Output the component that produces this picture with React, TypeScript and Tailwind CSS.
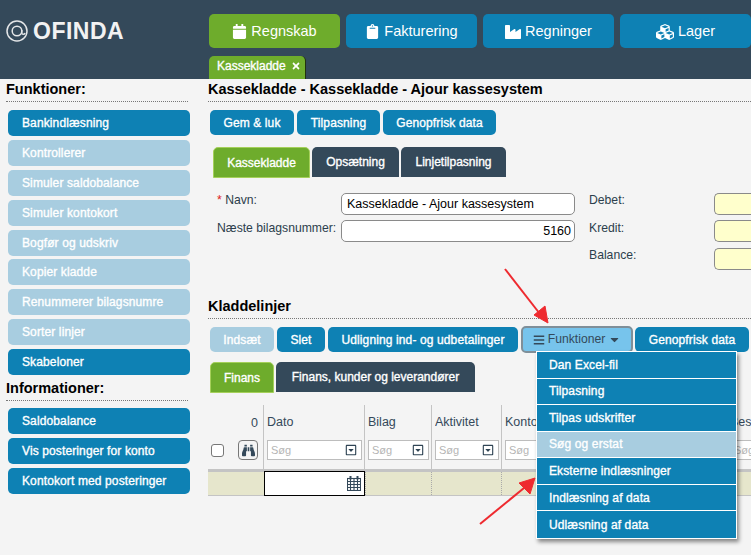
import React from 'react';
import { FaCalendar, FaClipboard, FaIndustry, FaCubes, FaBinoculars, FaTimes, FaBars, FaCaretDown, FaRegCaretSquareDown } from 'react-icons/fa';

const label = "text-white text-[12px] [-webkit-text-stroke:0.35px_#ffffff]";

const Side = ({ t, off }: { t: string; off?: boolean }) => (
  <div className={`h-[26px] w-[182px] ml-[8px] mb-[3.875px] rounded-[5px] pl-[14px] flex items-center tracking-[0.12px] ${label} ${off ? 'bg-[#a8cde0]' : 'bg-[#0e81b4]'}`}>{t}</div>
);

const Btn = ({ t, w, off, cls }: { t: string; w: string; off?: boolean; cls?: string }) => (
  <div className={`h-[25px] ${w} ${cls ?? ''} rounded-[5px] flex items-center justify-center tracking-[0.12px] ${label} ${off ? 'bg-[#a8cde0]' : 'bg-[#0e81b4]'}`}>{t}</div>
);

const Nav = ({ icon, t, on, w }: { icon: React.ReactNode; t: string; on?: boolean; w: string }) => (
  <div className={`h-[34px] ${w} shrink-0 rounded-[5px] pt-[1px] flex items-center justify-center gap-[4px] text-white text-[14.5px] ${on ? 'bg-[#6eac2c]' : 'bg-[#0e81b4]'}`}>{icon}<span>{t}</span></div>
);

const Heading = ({ t, cls }: { t: string; cls?: string }) => (
  <div className={`h-[23px] border-b border-dotted border-[#777] text-[14.5px] font-bold text-black leading-[20px] ${cls ?? ''}`}>{t}</div>
);

const Search = ({ w }: { w: string }) => (
  <div className={`h-[20px] ${w} bg-white border border-[#bdbdbd] flex items-center justify-between pl-[3px] pr-[4px] text-[11px] text-[#b5b5b5]`}>
    <span>Søg</span>
    <FaRegCaretSquareDown className="text-[#2f4454] text-[12px]" />
  </div>
);

const Head = ({ t, w, sw }: { t: string; w: string; sw: string }) => (
  <div className={`${w} shrink-0 h-[64px] border-l border-[#c4c4c4] pl-[3px] flex flex-col`}>
    <div className="h-[33px] pt-[10px] text-[12.5px] leading-[14px] text-[#34495a] whitespace-nowrap overflow-hidden">{t}</div>
    <div className="mt-[2px]"><Search w={sw} /></div>
  </div>
);

const Cell = ({ w }: { w: string }) => <div className={`${w} shrink-0 h-[23px] border-l border-dotted border-[#aaa]`} />;

const menu = ['Dan Excel-fil', 'Tilpasning', 'Tilpas udskrifter', 'Søg og erstat', 'Eksterne indlæsninger', 'Indlæsning af data', 'Udlæsning af data'];

export default function App() {
  return (
    <div className="relative w-[751px] h-[555px] overflow-hidden bg-[#f4f4f4] font-['Liberation_Sans',Arial,sans-serif]">
      <header className="h-[79px] bg-[#34495a] flex">
        <div className="w-[209px] shrink-0 pl-[6px] pt-[18px] flex items-start gap-[5px]">
          <svg width="22" height="22" viewBox="0 0 22 22" fill="none" stroke="#e4e6e8" strokeWidth="1.5" className="mt-[2px]">
            <circle cx="11" cy="11" r="10" />
            <circle cx="11" cy="11" r="4.8" />
            <path d="M15.8 10v3c0 1.8 2.6 1.8 3.2 0" />
          </svg>
          <span className="text-[23px] font-bold leading-[26px] text-[#f2f2f2] tracking-[0.5px]">OFINDA</span>
        </div>
        <div className="flex-1 min-w-0 overflow-hidden pt-[14px]">
          <div className="flex gap-[6px]">
            <Nav on w="w-[131px]" t="Regnskab" icon={<FaCalendar className="text-[15px]" />} />
            <Nav w="w-[131px]" t="Fakturering" icon={<FaClipboard className="text-[15px]" />} />
            <Nav w="w-[131px]" t="Regninger" icon={<FaIndustry className="text-[16px]" />} />
            <Nav w="w-[131px]" t="Lager" icon={<FaCubes className="text-[18px]" />} />
          </div>
          <div className={`mt-[8px] h-[23px] w-[97px] bg-[#6eac2c] rounded-t-[5px] border-r border-black/70 flex items-center pl-[8px] pb-[3px] gap-[5px] ${label}`}>
            Kassekladde <FaTimes className="text-[10px]" />
          </div>
        </div>
      </header>

      <div className="flex">
        <aside className="w-[208px] shrink-0">
          <Heading t="Funktioner:" cls="ml-[6px] w-[182px] mb-[8px]" />
          <Side t="Bankindlæsning" />
          <Side off t="Kontrollerer" />
          <Side off t="Simuler saldobalance" />
          <Side off t="Simuler kontokort" />
          <Side off t="Bogfør og udskriv" />
          <Side off t="Kopier kladde" />
          <Side off t="Renummerer bilagsnumre" />
          <Side off t="Sorter linjer" />
          <Side t="Skabeloner" />
          <Heading t="Informationer:" cls="ml-[6px] w-[182px] mb-[7px] -mt-[1px]" />
          <Side t="Saldobalance" />
          <Side t="Vis posteringer for konto" />
          <Side t="Kontokort med posteringer" />
        </aside>

        <main className="flex-1 min-w-0">
          <Heading t="Kassekladde - Kassekladde - Ajour kassesystem" cls="mb-[8px]" />
          <div className="flex gap-[3px] pl-[2px]">
            <Btn t="Gem & luk" w="w-[84px]" />
            <Btn t="Tilpasning" w="w-[83px]" />
            <Btn t="Genopfrisk data" w="w-[113px]" />
          </div>
          <div className="flex gap-[2px] pl-[5px] mt-[12px]">
            <div className={`h-[31px] w-[97px] bg-[#6eac2c] border border-[#a5d05a] rounded-t-[5px] flex items-center justify-center ${label}`}>Kassekladde</div>
            <div className={`h-[30px] w-[87px] bg-[#34495a] rounded-t-[5px] flex items-center justify-center ${label}`}>Opsætning</div>
            <div className={`h-[30px] w-[105px] bg-[#34495a] rounded-t-[5px] flex items-center justify-center ${label}`}>Linjetilpasning</div>
          </div>
          <div className="flex mt-[15px] text-[12.2px] leading-[14px] text-[#2c3e4c]">
            <div className="w-[133px] shrink-0 pl-[9px]">
              <div className="h-[28px]"><span className="text-[#d22]">* </span>Navn:</div>
              <div className="h-[27px] whitespace-nowrap">Næste bilagsnummer:</div>
            </div>
            <div className="w-[234px] shrink-0 text-[12.5px]">
              <div className="h-[22px] mb-[5px] bg-white border border-[#8a8a8a] rounded-[5px] px-[5px] flex items-center text-black">Kassekladde - Ajour kassesystem</div>
              <div className="h-[22px] bg-white border border-[#8a8a8a] rounded-[5px] px-[3px] flex items-center justify-end text-black">5160</div>
            </div>
            <div className="w-[139px] shrink-0 pl-[14px]">
              <div className="h-[28px]">Debet:</div>
              <div className="h-[27px]">Kredit:</div>
              <div className="h-[22px]">Balance:</div>
            </div>
            <div className="flex-1">
              <div className="h-[22px] mb-[5px] bg-[#ffffcc] border border-[#8a8a8a] rounded-l-[5px] border-r-0" />
              <div className="h-[22px] mb-[6px] bg-[#ffffcc] border border-[#8a8a8a] rounded-l-[5px] border-r-0" />
              <div className="h-[22px] bg-[#ffffcc] border border-[#8a8a8a] rounded-l-[5px] border-r-0" />
            </div>
          </div>
          <Heading t="Kladdelinjer" cls="mt-[26px] mb-[8px]" />
          <div className="flex gap-[3px] pl-[2px] items-center">
            <Btn off t="Indsæt" w="w-[64px]" />
            <Btn t="Slet" w="w-[48px]" />
            <Btn t="Udligning ind- og udbetalinger" w="w-[190px]" />
            <div className="h-[27px] w-[112px] -my-[1px] -mr-[1px] bg-[#77c4ec] border-2 border-[#7f8f99] rounded-[5px] flex items-center justify-center gap-[3px] text-[#34495a] text-[12.2px]">
              <FaBars className="text-[12px]" /> Funktioner <FaCaretDown className="text-[13px]" />
            </div>
            <Btn t="Genopfrisk data" w="w-[114px]" />
          </div>
          <div className="flex gap-[2px] pl-[2px] mt-[10px]">
            <div className={`h-[31px] w-[64px] bg-[#6eac2c] border border-[#a5d05a] rounded-t-[5px] flex items-center justify-center ${label}`}>Finans</div>
            <div className={`h-[30px] w-[199px] bg-[#34495a] rounded-t-[5px] flex items-center justify-center ${label}`}>Finans, kunder og leverandører</div>
          </div>
          <div className="flex mt-[12px] w-[600px]">
            <div className="w-[55px] shrink-0 h-[64px] relative">
              <div className="text-right pr-[5px] pt-[11px] text-[12.5px] leading-[14px] text-[#34495a]">0</div>
              <div className="mt-[10px] flex items-center pl-[3px] gap-[14px]">
                <div className="w-[13px] h-[13px] bg-white border border-[#777] rounded-[3px]" />
                <div className="w-[20px] h-[20px] bg-[#f4f4f4] border border-[#777] rounded-[4px] flex items-center justify-center text-[#34495a] text-[13px]"><FaBinoculars /></div>
              </div>
            </div>
            <Head t="Dato" w="w-[101px]" sw="w-[95px]" />
            <Head t="Bilag" w="w-[67px]" sw="w-[61px]" />
            <Head t="Aktivitet" w="w-[70px]" sw="w-[64px]" />
            <Head t="Konto" w="w-[225px]" sw="w-[219px]" />
            <Head t="Beskrivelse" w="w-[73px]" sw="w-[64px]" />
          </div>
          <div className="h-[27px] bg-[#e6e6cc] border-t-[3px] border-b border-t-[#c4c4c4] border-b-[#c4c4c4] flex">
            <div className="w-[56px] shrink-0" />
            <div className="w-[101px] shrink-0 h-[25px] -mt-[1px] bg-white border border-black flex justify-end pr-[3px] items-center">
              <svg width="14" height="15" viewBox="0 0 14 15" fill="none" stroke="#34495a" strokeWidth="1.1">
                <rect x="0.5" y="2.5" width="13" height="12" />
                <path d="M0 5.5h14v-3H0zM0 8.5h14M0 11.5h14M3.5 3v12M7 3v12M10.5 3v12" />
                <path d="M3.5 0v3.5M10.5 0v3.5" strokeWidth="2" />
              </svg>
            </div>
            <Cell w="w-[66px]" />
            <Cell w="w-[70px]" />
            <Cell w="w-[225px]" />
          </div>
        </main>
      </div>

      <div className="absolute left-[536px] top-[351px] w-[201px] bg-[#0e81b4] border border-white shadow-[2px_3px_4px_rgba(0,0,0,0.45)] flex flex-col">
        {menu.map((m, i) => (
          <div key={m} className={`h-[26.57px] pl-[12px] flex items-center tracking-[0.12px] ${label} ${i < menu.length - 1 ? 'border-b border-white' : ''} ${i === 3 ? 'bg-[#a8cde0]' : ''}`}>{m}</div>
        ))}
      </div>

      <svg className="absolute left-0 top-0 pointer-events-none" width="751" height="555" fill="none">
        <path d="M505 269 L540 314" stroke="#ee2a2f" strokeWidth="2" />
        <path d="M548 323 L534 315 L545 306 Z" fill="#ee2a2f" stroke="#ee2a2f" />
        <path d="M480 524 L524 488" stroke="#ee2a2f" strokeWidth="2" />
        <path d="M535 478 L530 494 L519 483 Z" fill="#ee2a2f" stroke="#ee2a2f" />
      </svg>
    </div>
  );
}
